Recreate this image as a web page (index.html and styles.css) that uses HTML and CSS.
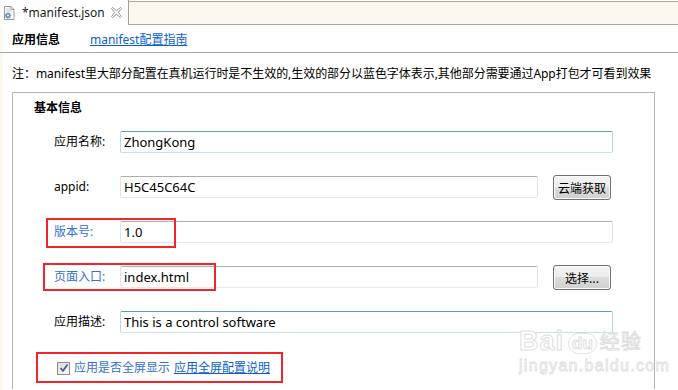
FILE: index.html
```html
<!DOCTYPE html>
<html>
<head>
<meta charset="utf-8">
<link rel="stylesheet" href="styles.css">
</head>
<body>
<div class="tabbar">
  <div class="tab">
    <svg class="tab-icon" width="12" height="14" viewBox="0 0 12 14">
      <path d="M1.5 0.5h6.5l3 3v10h-9.5z" fill="#fff" stroke="#9a9a9a"/>
      <path d="M8 0.5v3h3" fill="none" stroke="#9a9a9a"/>
      <path d="M3 3h4M3 5h6" stroke="#c8c8c8"/>
      <circle cx="5" cy="9.5" r="2.6" fill="#6e8fb8"/>
      <circle cx="5" cy="9.5" r="1" fill="#fff"/>
      <path d="M5 6.2v1M5 11.8v1M1.7 9.5h1M7.3 9.5h1M2.7 7.2l.7.7M6.6 11.1l.7.7M2.7 11.8l.7-.7M6.6 7.9l.7-.7" stroke="#6e8fb8" stroke-width="1.1"/>
    </svg>
    <span class="tab-title">*manifest.json</span>
    <svg class="tab-close" width="11" height="11" viewBox="0 0 11 11">
      <path d="M1.5 0.5l4 3.2 4-3.2 1 1-3.2 4 3.2 4-1 1-4-3.2-4 3.2-1-1 3.2-4-3.2-4z" fill="#fff" stroke="#8a8a8a" stroke-width="0.9"/>
    </svg>
  </div>
  <div class="tab-fill"></div>
</div>

<div class="main">
  <div class="header">
    <span class="header-title">应用信息</span>
    <a class="link header-link" href="#">manifest配置指南</a>
  </div>
  <div class="content">
    <p class="note">注：manifest里大部分配置在真机运行时是不生效的,生效的部分以蓝色字体表示,其他部分需要通过App打包才可看到效果</p>
    <div class="group">
      <div class="group-title">基本信息</div>
      <div class="rows">
        <div class="row">
          <label class="label">应用名称:</label>
          <input class="field field-wide field-active" value="ZhongKong">
        </div>
        <div class="row">
          <label class="label">appid:</label>
          <input class="field field-short" value="H5C45C64C">
          <button class="btn">云端获取</button>
        </div>
        <div class="row">
          <label class="label label-blue">版本号:</label>
          <input class="field field-wide" value="1.0">
        </div>
        <div class="row">
          <label class="label label-blue">页面入口:</label>
          <input class="field field-short" value="index.html">
          <button class="btn">选择...</button>
        </div>
        <div class="row">
          <label class="label">应用描述:</label>
          <input class="field field-wide field-active" value="This is a control software">
        </div>
      </div>
      <div class="check-row">
        <span class="checkbox">
          <svg width="10" height="10" viewBox="0 0 10 10"><path d="M1.5 5l2.5 2.8 4.5-6.3" fill="none" stroke="#4d5f88" stroke-width="1.8"/></svg>
        </span>
        <span class="check-text">应用是否全屏显示</span>
        <a class="link" href="#">应用全屏配置说明</a>
      </div>
    </div>
  </div>
</div>

<div class="mark mark-1"></div>
<div class="mark mark-2"></div>
<div class="mark mark-3"></div>

<div class="watermark">
  <div class="wm-top"><span class="wm-bai">Bai</span><span class="wm-paw">du</span><span class="wm-cn">经验</span></div>
  <div class="wm-url">jingyan.baidu.com</div>
</div>
</body>
</html>
```

FILE: styles.css
```css
html, body {
  margin: 0;
  padding: 0;
  width: 678px;
  height: 390px;
  overflow: hidden;
  background: #fff;
}
body {
  position: relative;
  font-family: "Noto Sans", "Noto Sans CJK SC", sans-serif;
  font-size: 12px;
  color: #000;
}

/* tab bar */
.tabbar {
  display: flex;
  height: 24px;
  background: #fdf8ee;
  border-bottom: 1px solid #a8a8a8;
}
.tab {
  display: flex;
  align-items: center;
  width: 129px;
  height: 25px;
  margin-bottom: -1px;
  background: #fff;
  border-right: 1px solid #a0a0a0;
  box-sizing: border-box;
  padding: 0 6px 0 3px;
}
.tab-icon { flex: none; }
.tab-title {
  margin-left: 7px;
  font-size: 12px;
  color: #1a1a1a;
  line-height: 16px;
  white-space: nowrap;
}
.tab-close {
  margin-left: auto;
  flex: none;
}
.tab-fill {
  flex: 1;
  margin-top: 1px;
  border-top: 1px solid #a8a8a8;
}

/* main */
.main {
  background: linear-gradient(to right, #fdf8ee 3px, #fff 3px);
  height: 365px;
}
.header {
  display: flex;
  align-items: center;
  height: 28px;
  border-bottom: 1px solid #a8a8a8;
  padding-left: 12px;
  box-sizing: border-box;
}
.header-title {
  font-weight: bold;
  width: 78px;
}
.link {
  color: #0a5fd0;
  text-decoration: underline;
}
.content {
  padding-left: 12px;
}
.note {
  margin: 0;
  padding-top: 13px;
  line-height: 16px;
  height: 16px;
  white-space: nowrap;
  letter-spacing: -0.05px;
}

.group {
  margin-top: 10px;
  width: 643px;
  height: 297px;
  box-sizing: border-box;
  border: 1px solid #b4b4b4;
  border-bottom: none;
  padding: 7px 0 0 21px;
}
.group-title {
  font-weight: bold;
  line-height: 16px;
}
.rows {
  display: flex;
  flex-direction: column;
  gap: 21px;
  margin-top: 14px;
  padding-left: 20px;
}
.row {
  display: flex;
  align-items: center;
  height: 24px;
}
.label {
  width: 66px;
  flex: none;
  line-height: 16px;
}
.label-blue { color: #3670d4; }

.field {
  height: 22px;
  box-sizing: border-box;
  padding: 0 3px;
  margin: 0;
  font-family: "Noto Sans", "Noto Sans CJK SC", sans-serif;
  font-size: 13px;
  color: #000;
  background: #fff;
  border: 1px solid;
  border-color: #abadb3 #e2e3ea #e3e9ef #e2e3ea;
  border-radius: 2px;
  outline: none;
}
.field-active {
  border-color: #5a9bd0 #b9d6ec #c5e0f2 #b9d6ec;
}
.field-wide { width: 493px; }
.field-short { width: 418px; }

.btn {
  margin-left: 15px;
  width: 58px;
  height: 25px;
  padding: 0;
  font-family: "Noto Sans CJK SC", sans-serif;
  font-size: 12px;
  color: #000;
  background: linear-gradient(#f4f4f4, #ebebeb 50%, #dcdcdc 50%, #d0d0d0);
  border: 1px solid #707070;
  border-radius: 3px;
  box-shadow: inset 0 0 0 1px #fafafa;
}

.check-row {
  display: flex;
  align-items: center;
  margin-top: 26px;
  padding-left: 23px;
  line-height: 16px;
}
.checkbox {
  width: 13px;
  height: 13px;
  box-sizing: border-box;
  border: 1px solid #8e8f8f;
  background: linear-gradient(135deg, #dcdcdc, #f6f6f6);
  display: flex;
  align-items: center;
  justify-content: center;
  margin-right: 4px;
}
.check-text {
  color: #3670d4;
  margin-right: 4px;
}

/* red annotation boxes */
.mark {
  position: absolute;
  border: 2px solid #f0262b;
  box-sizing: border-box;
}
.mark-1 { left: 46px; top: 218px; width: 130px; height: 30px; }
.mark-2 { left: 43px; top: 263px; width: 173px; height: 28px; }
.mark-3 { left: 36px; top: 352px; width: 247px; height: 31px; }

/* watermark */
.watermark {
  position: absolute;
  left: 519px;
  top: 328px;
  color: #fff;
  -webkit-text-stroke: 1px #dedede;
  font-family: "Liberation Sans", sans-serif;
}
.wm-top {
  display: flex;
  align-items: flex-end;
  line-height: 26px;
}
.wm-bai { font-size: 27px; font-weight: bold; letter-spacing: 1px; }
.wm-paw {
  font-size: 17px;
  font-weight: bold;
  margin-left: 4px;
  padding: 0 3px;
  border: 1px solid #e3e3e3;
  border-radius: 11px;
  line-height: 19px;
}
.wm-cn {
  font-family: "Noto Sans CJK SC", sans-serif;
  font-size: 20px;
  margin-left: 3px;
  letter-spacing: 1px;
}
.wm-url {
  font-size: 16px;
  line-height: 16px;
  margin-top: 4px;
  letter-spacing: 1.3px;
  color: #fafafa;
  -webkit-text-stroke: 0.8px #e0e0e0;
}
```
